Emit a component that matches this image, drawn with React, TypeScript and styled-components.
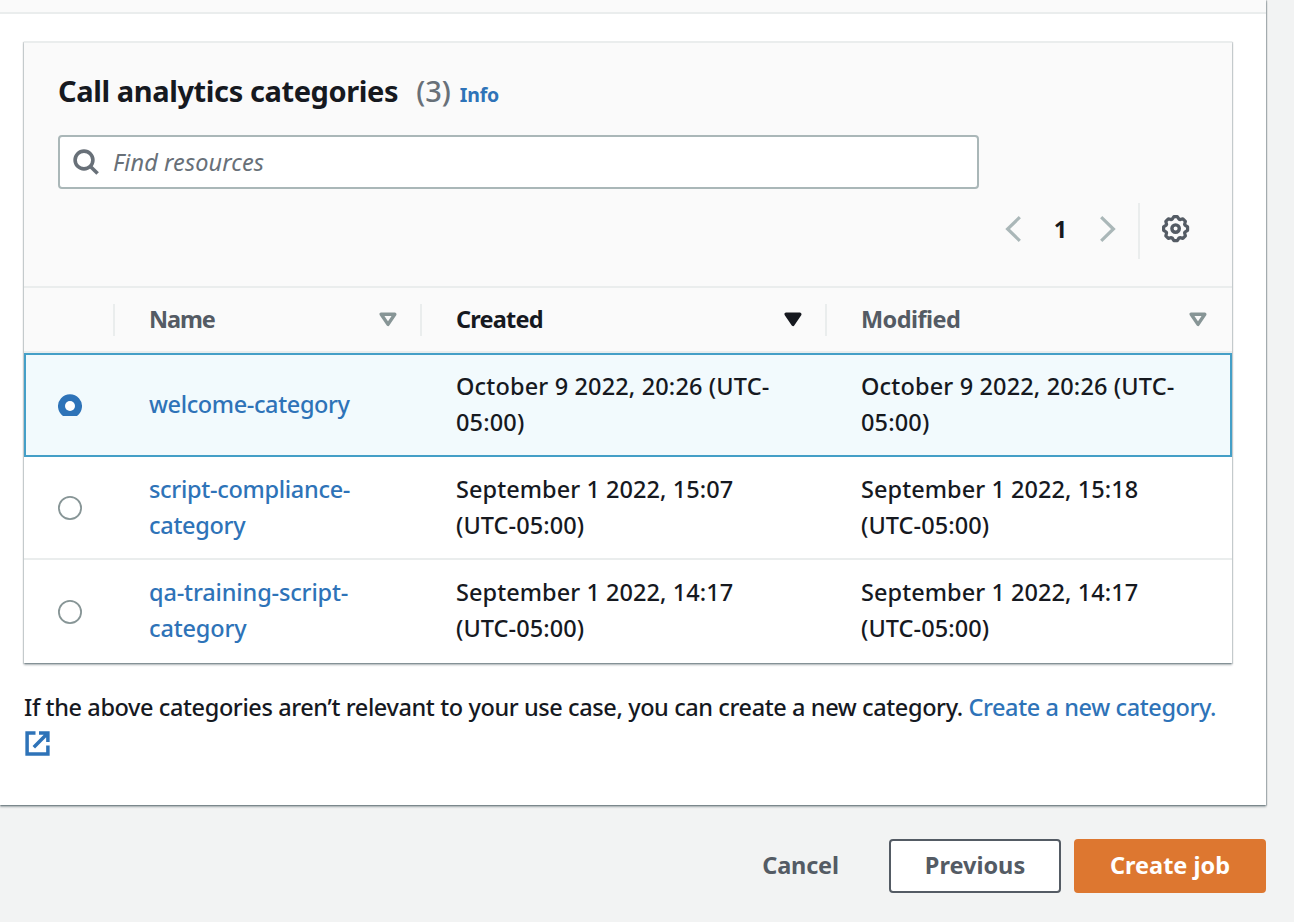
import React from "react";
import styled, { createGlobalStyle } from "styled-components";

const GlobalStyle = createGlobalStyle`
  * { box-sizing: border-box; }
  html, body { margin: 0; padding: 0; }
  body {
    height: 922px;
    overflow: hidden;
    background: #f2f3f3;
    color: #16191f;
    font-family: "Noto Sans", "Open Sans", sans-serif;
    font-size: 23.5px;
    line-height: 36px;
  }
`;

const Page = styled.main`
  width: 1294px;
  height: 922px;
  overflow: hidden;
`;

const containerShadow = `
  0 2px 2px 0 rgba(0, 28, 36, 0.3),
  1px 1px 1px 0 rgba(0, 28, 36, 0.15),
  -1px 1px 1px 0 rgba(0, 28, 36, 0.15)
`;

const Panel = styled.section`
  width: 1266px;
  height: 805px;
  background: #fff;
  box-shadow: ${containerShadow}, 1px 0 1px 0 rgba(0, 28, 36, 0.12);
`;

const PanelTop = styled.div`
  height: 14px;
  background: #fafafa;
  border-bottom: 2px solid #eaeded;
`;

const PanelBody = styled.div`
  padding: 27px 34px 0 24px;
`;

const Card = styled.div`
  width: 1208px;
  height: 622px;
  border-top: 2px solid #eaeded;
  background: #fff;
  box-shadow: ${containerShadow};
`;

const CardHeader = styled.header`
  height: 245px;
  padding: 28px 34px 0;
  background: #fafafa;
  border-bottom: 2px solid #eaeded;
`;

const Title = styled.h2`
  display: flex;
  align-items: baseline;
  height: 44px;
  margin: 0;
  font-size: 29px;
  line-height: 40px;
  font-weight: 700;
  letter-spacing: -0.4px;
  white-space: nowrap;
`;

const Count = styled.span`
  margin-left: 18px;
  color: #687078;
  font-weight: 500;
  letter-spacing: 0;
`;

const Info = styled.a`
  margin-left: 9px;
  color: #2e73b8;
  font-size: 19.5px;
  letter-spacing: -0.2px;
`;

const SearchBox = styled.label`
  display: flex;
  align-items: center;
  gap: 14px;
  width: 921px;
  height: 54px;
  margin-top: 20px;
  padding-left: 13px;
  border: 2px solid #aab7b8;
  border-radius: 4px;
  background: #fff;
`;

const SearchInput = styled.input`
  flex: 1;
  padding: 0;
  border: 0;
  outline: 0;
  background: transparent;
  font: inherit;
  letter-spacing: 0.1px;
  &::placeholder {
    color: #687078;
    font-style: italic;
    opacity: 1;
  }
`;

const Tools = styled.div`
  display: flex;
  align-items: center;
  justify-content: flex-end;
  height: 56px;
  margin-top: 14px;
  padding-right: 8px;
  > svg { margin-bottom: 4px; }
`;

const PageNumber = styled.span`
  width: 79px;
  padding-bottom: 5px;
  text-align: center;
  font-weight: 700;
`;

const ToolDivider = styled.span`
  width: 2px;
  height: 56px;
  margin: 0 22px;
  background: #eaeded;
`;

const Row = styled.div<{ $selected?: boolean; $last?: boolean }>`
  display: grid;
  grid-template-columns: 91px 307px 405px 405px;
  align-items: center;
  height: ${(p) => (p.$selected ? 104 : 103)}px;
  background: ${(p) => (p.$selected ? "#f2fafd" : "#fff")};
  box-shadow: ${(p) =>
    p.$selected ? "inset 0 0 0 2px #449fc7" : p.$last ? "none" : "inset 0 -2px 0 #eaeded"};
`;

const HeadRow = styled.div`
  display: grid;
  grid-template-columns: 91px 307px 405px 405px;
  align-items: center;
  height: 65px;
  background: #fafafa;
  border-bottom: 2px solid #eaeded;
`;

const HeadCell = styled.div<{ $active?: boolean; $last?: boolean }>`
  display: flex;
  align-items: center;
  justify-content: space-between;
  height: 32px;
  padding: 0 ${(p) => (p.$last ? 25 : 23)}px 0 34px;
  border-right: ${(p) => (p.$last ? 0 : 2)}px solid #eaeded;
  color: ${(p) => (p.$active ? "#16191f" : "#545b64")};
  font-weight: 700;
`;

const HeadLabel = styled.span<{ $spacing: number }>`
  padding-bottom: 2px;
  letter-spacing: ${(p) => p.$spacing}px;
`;

const Cell = styled.div<{ $spacing?: number }>`
  padding-left: 34px;
  padding-bottom: 3px;
  white-space: nowrap;
  font-weight: 500;
  letter-spacing: ${(p) => p.$spacing ?? 0.13}px;
`;

const Link = styled.a`
  color: #2e73b8;
  font-weight: 500;
`;

const RadioCell = styled.div<{ $raised?: boolean }>`
  display: flex;
  padding: ${(p) => (p.$raised ? "0 0 1px" : "1px 0 0")};
  padding-left: 34px;
`;

const Note = styled.p`
  margin: 26px 0 0;
  white-space: nowrap;
  font-weight: 500;
  letter-spacing: -0.4px;
  svg { display: block; margin: 6px 0 0 1px; }
`;

const Actions = styled.footer`
  display: flex;
  align-items: center;
  justify-content: flex-end;
  width: 1266px;
  margin-top: 34px;
`;

const Button = styled.button<{ $kind: "link" | "normal" | "primary" }>`
  width: ${(p) => ({ link: 149, normal: 172, primary: 192 })[p.$kind]}px;
  height: 54px;
  margin-left: ${(p) => (p.$kind === "primary" ? 13 : p.$kind === "normal" ? 14 : 0)}px;
  padding: 0 0 3px;
  border: 2px solid ${(p) => ({ link: "transparent", normal: "#545b64", primary: "#dd7730" })[p.$kind]};
  border-radius: 4px;
  background: ${(p) => ({ link: "transparent", normal: "#fff", primary: "#dd7730" })[p.$kind]};
  color: ${(p) => (p.$kind === "primary" ? "#fff" : "#545b64")};
  font: inherit;
  font-weight: 700;
  letter-spacing: ${(p) => (p.$kind === "link" ? -0.2 : 0)}px;
`;

const SearchIcon = () => (
  <svg width="26" height="26" viewBox="0 0 26 26" fill="none" stroke="#687078" strokeWidth="3.6">
    <circle cx="11" cy="11" r="8.9" />
    <path d="M17.2 17.2L24.6 24.6" />
  </svg>
);

const Chevron = ({ right }: { right?: boolean }) => (
  <svg width="16" height="26" viewBox="0 0 16 26" fill="none" stroke="#aab7b8" strokeWidth="3.2">
    <path d={right ? "M1.2 1.2L13.4 13L1.2 24.8" : "M14.8 1.2L2.6 13L14.8 24.8"} />
  </svg>
);

const GearIcon = () => (
  <svg width="28" height="28" viewBox="0.4 0.4 28 28" fill="none" stroke="#545b64" strokeLinejoin="round">
    <path
      strokeWidth="3.2"
      d="M10.6 4.6L12.3 2H15.7L17.4 4.6L18.3 5L21.3 4.2L23.8 6.7L23 9.7L23.4 10.6L26 12.3V15.7L23.4 17.4L23 18.3L23.8 21.3L21.3 23.8L18.3 23L17.4 23.4L15.7 26H12.3L10.6 23.4L9.7 23L6.7 23.8L4.2 21.3L5 18.3L4.6 17.4L2 15.7V12.3L4.6 10.6L5 9.7L4.2 6.7L6.7 4.2L9.7 5Z"
    />
    <circle cx="14" cy="14" r="3.7" strokeWidth="3.4" />
  </svg>
);

const SortIcon = ({ filled }: { filled?: boolean }) => (
  <svg width="18" height="15" viewBox="0 0 18 15" strokeLinejoin="round">
    <path
      d="M2.2 2.2H15.8L9 12.4Z"
      fill={filled ? "#16191f" : "none"}
      stroke={filled ? "#16191f" : "#879596"}
      strokeWidth="3.4"
    />
  </svg>
);

const Radio = ({ checked }: { checked?: boolean }) => (
  <svg width="24" height="24" viewBox="0 0 24 24">
    {checked ? (
      <>
        <path d="M5 22A12 12 0 1 1 19 22Z" fill="#2e73b8" />
        <circle cx="12" cy="12" r="5" fill="#fff" />
      </>
    ) : (
      <circle cx="12" cy="12" r="11.1" fill="#fff" stroke="#879596" strokeWidth="1.8" />
    )}
  </svg>
);

const ExternalIcon = () => (
  <svg width="25" height="25" viewBox="0 0 25 25" fill="none" stroke="#2e73b8" strokeWidth="3.5">
    <path d="M10.5 2.1H2.1V22.9H22.9V14.5" />
    <path d="M14 2.1H22.9V11M22.4 2.6L8.8 16.2" />
  </svg>
);

const rows = [
  {
    name: ["welcome-category"],
    created: ["October 9 2022, 20:26 (UTC-", "05:00)"],
    modified: ["October 9 2022, 20:26 (UTC-", "05:00)"],
  },
  {
    name: ["script-compliance-", "category"],
    created: ["September 1 2022, 15:07", "(UTC-05:00)"],
    modified: ["September 1 2022, 15:18", "(UTC-05:00)"],
  },
  {
    name: ["qa-training-script-", "category"],
    created: ["September 1 2022, 14:17", "(UTC-05:00)"],
    modified: ["September 1 2022, 14:17", "(UTC-05:00)"],
  },
];

const Lines = ({ text }: { text: string[] }) => (
  <>
    {text.map((line, i) => (
      <React.Fragment key={i}>
        {i > 0 && <br />}
        {line}
      </React.Fragment>
    ))}
  </>
);

export default function App() {
  return (
    <Page>
      <GlobalStyle />
      <Panel>
        <PanelTop />
        <PanelBody>
          <Card>
            <CardHeader>
              <Title>
                Call analytics categories
                <Count>(3)</Count>
                <Info>Info</Info>
              </Title>
              <SearchBox>
                <SearchIcon />
                <SearchInput placeholder="Find resources" />
              </SearchBox>
              <Tools>
                <Chevron />
                <PageNumber>1</PageNumber>
                <Chevron right />
                <ToolDivider />
                <GearIcon />
              </Tools>
            </CardHeader>
            <HeadRow>
              <HeadCell />
              <HeadCell>
                <HeadLabel $spacing={-1.1}>Name</HeadLabel>
                <SortIcon />
              </HeadCell>
              <HeadCell $active>
                <HeadLabel $spacing={-0.8}>Created</HeadLabel>
                <SortIcon filled />
              </HeadCell>
              <HeadCell $last>
                <HeadLabel $spacing={-0.55}>Modified</HeadLabel>
                <SortIcon />
              </HeadCell>
            </HeadRow>
            {rows.map((row, i) => (
              <Row key={i} $selected={i === 0} $last={i === 2}>
                <RadioCell $raised={i === 1}>
                  <Radio checked={i === 0} />
                </RadioCell>
                <Cell $spacing={i === 0 ? -0.38 : i === 1 ? -0.3 : -0.15}>
                  <Link>
                    <Lines text={row.name} />
                  </Link>
                </Cell>
                <Cell $spacing={i === 0 ? 0.15 : 0.06}>
                  <Lines text={row.created} />
                </Cell>
                <Cell $spacing={i === 0 ? 0.15 : 0.06}>
                  <Lines text={row.modified} />
                </Cell>
              </Row>
            ))}
          </Card>
          <Note>
            If the above categories aren’t relevant to your use case, you can create a new category.{" "}
            <Link>Create a new category.</Link>
            <ExternalIcon />
          </Note>
        </PanelBody>
      </Panel>
      <Actions>
        <Button $kind="link">Cancel</Button>
        <Button $kind="normal">Previous</Button>
        <Button $kind="primary">Create job</Button>
      </Actions>
    </Page>
  );
}
